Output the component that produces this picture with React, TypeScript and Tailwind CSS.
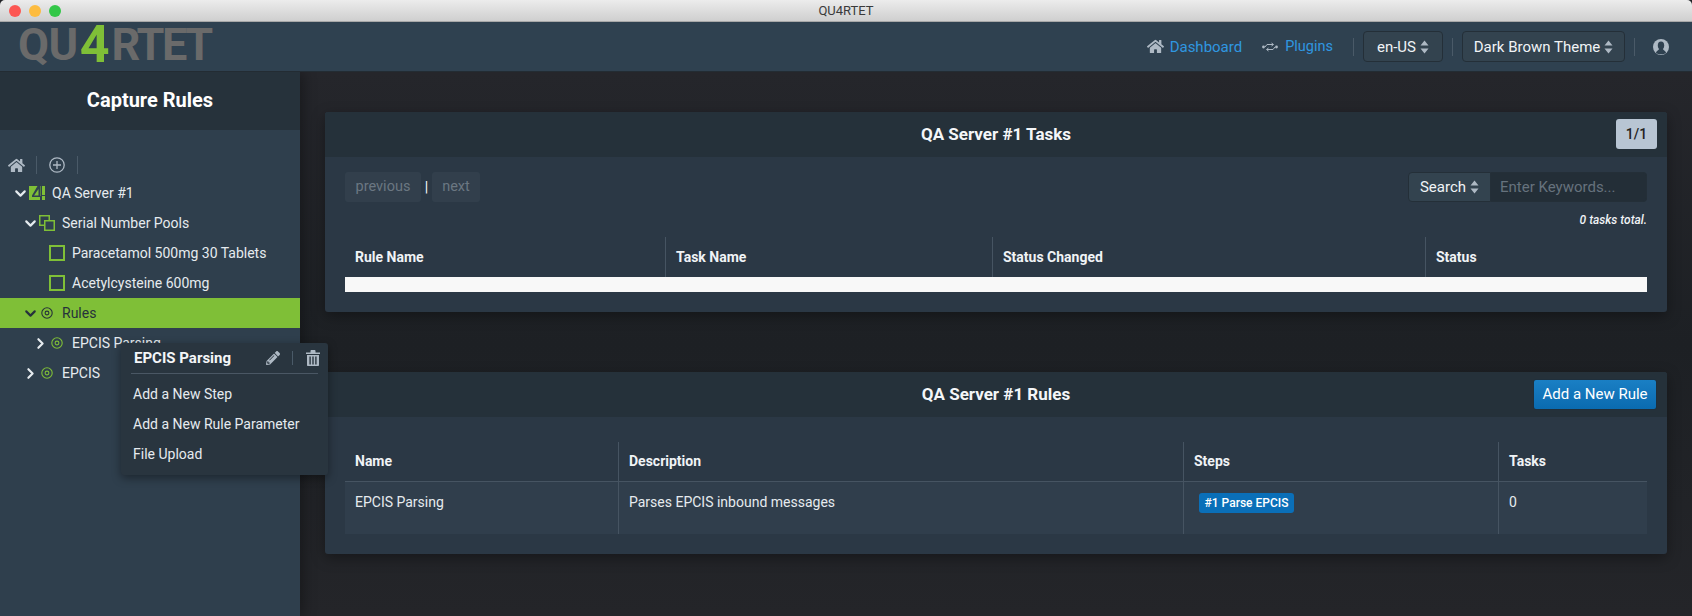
import React from "react";
import { ChevronDown, ChevronRight } from "lucide-react";
import { FaHome, FaPencilAlt } from "react-icons/fa";

const Updown = ({ c = "#aeb9c4" }: { c?: string }) => (
  <svg width="9" height="14" viewBox="0 0 9 14" className="shrink-0">
    <path d="M4.5 0.5 L8.5 5.5 H0.5 Z M4.5 13.5 L8.5 8.5 H0.5 Z" fill={c} />
  </svg>
);

const Target = ({ c = "#7fbf37" }: { c?: string }) => (
  <svg width="12" height="12" viewBox="0 0 12 12" className="shrink-0">
    <circle cx="6" cy="6" r="5.2" fill="none" stroke={c} strokeWidth="1.1" />
    <circle cx="6" cy="6" r="1.9" fill="none" stroke={c} strokeWidth="1.1" />
  </svg>
);

const Plugin = () => (
  <svg width="16" height="10" viewBox="0 0 16 10">
    <circle cx="1.5" cy="5" r="1.4" fill="#aeb9c4" />
    <circle cx="14.5" cy="5" r="1.4" fill="#aeb9c4" />
    <path d="M3 5 L5 2.5 H11 M9.5 1 L11.5 2.5 L9.5 4 M13 5 L11 7.5 H5 M6.5 6 L4.5 7.5 L6.5 9" fill="none" stroke="#aeb9c4" strokeWidth="1" />
  </svg>
);

const User = () => (
  <svg width="16" height="16" viewBox="0 0 16 16">
    <circle cx="8" cy="8" r="8" fill="#aeb9c4" />
    <ellipse cx="8" cy="6.6" rx="3.2" ry="4" fill="#2f4150" />
    <path d="M2.8 14 C3.5 11.5 6 11 6.5 9.5 H9.5 C10 11 12.5 11.5 13.2 14 C10.5 15.8 5.5 15.8 2.8 14 Z" fill="#2f4150" />
  </svg>
);

const Trash = () => (
  <svg width="14" height="16" viewBox="0 0 14 16">
    <path d="M0 2.5 H4.5 V1 C4.5 .4 5 0 5.5 0 H8.5 C9 0 9.5 .4 9.5 1 V2.5 H14 V4 H0 Z" fill="#aeb9c4" />
    <path d="M1 5 H13 V15 C13 15.6 12.6 16 12 16 H2 C1.4 16 1 15.6 1 15 Z M3.4 6.5 V14.5 H4.8 V6.5 Z M6.3 6.5 V14.5 H7.7 V6.5 Z M9.2 6.5 V14.5 H10.6 V6.5 Z" fill="#aeb9c4" fillRule="evenodd" />
  </svg>
);

const Pools = () => (
  <svg width="16" height="16" viewBox="0 0 16 16" className="shrink-0">
    <rect x="0.75" y="0.75" width="9.5" height="9.5" fill="none" stroke="#7fbf37" strokeWidth="1.5" />
    <rect x="5.75" y="5.75" width="9.5" height="9.5" fill="#2f4150" stroke="#7fbf37" strokeWidth="1.5" />
  </svg>
);

const MiniLogo = () => (
  <svg width="16" height="14" viewBox="0 0 16 14" className="shrink-0">
    <rect width="16" height="14" fill="#7fbf37" />
    <path d="M8.5 0 H11 V10 H13 V14 H11 V11 H3 V9.5 Z M9.5 3 L5 9.5 H9.5 Z" fill="#2f4150" fillRule="evenodd" />
    <path d="M13 0 V14 H11.5 V0 Z" fill="#2f4150" />
    <path d="M13 9 H16 V10 H13 Z" fill="#2f4150" />
  </svg>
);

const Sep = ({ h = "h-[18px]" }: { h?: string }) => <span className={`w-px ${h} bg-[#4a5a68] shrink-0`} />;

const TreeRow = ({ indent, open, icon, label, active }: { indent: string; open?: boolean; icon: React.ReactNode; label: string; active?: boolean }) => (
  <div className={`h-[30px] flex items-center ${indent} ${active ? "bg-[#7fbf37] text-[#26323b]" : "text-[#e6ebef]"}`}>
    {open === undefined ? null : open ? (
      <ChevronDown size={17} strokeWidth={3} className="shrink-0 -mx-[1.5px]" />
    ) : (
      <ChevronRight size={17} strokeWidth={3} className="shrink-0 -mx-[1.5px]" />
    )}
    {icon}
    <span className="whitespace-nowrap">{label}</span>
  </div>
);

const Box = () => <span className="w-4 h-4 border-2 border-[#7fbf37] mr-[7px] shrink-0" />;

const HeadCell = ({ children, first }: { children: React.ReactNode; first?: boolean }) => (
  <div className={`px-[10px] flex items-center font-bold text-[#f0f3f6] ${first ? "" : "border-l border-[#465462]"}`}>{children}</div>
);

const BodyCell = ({ children, first }: { children: React.ReactNode; first?: boolean }) => (
  <div className={`px-[10px] pt-[10px] text-[#e6ebef] ${first ? "" : "border-l border-[#465462]"}`}>{children}</div>
);

const Card = ({ title, action, children, className }: { title: string; action: React.ReactNode; children: React.ReactNode; className: string }) => (
  <section className={`rounded-[3px] bg-[#2b3845] shadow-[0_4px_14px_rgba(0,0,0,0.35)] overflow-hidden ${className}`}>
    <header className="relative h-[45px] bg-[#25313a] flex items-center justify-center">
      <h2 className="text-[17px] font-bold text-[#f4f6f8]">{title}</h2>
      {action}
    </header>
    {children}
  </section>
);

export default function App() {
  return (
    <div className="w-[1692px] h-[616px] overflow-hidden flex flex-col text-[14px] text-white bg-[#202226]" style={{ fontFamily: "Roboto, 'Liberation Sans', sans-serif" }}>
      <div className="relative h-[22px] shrink-0 rounded-t-[5px] bg-gradient-to-b from-[#ececec] to-[#cfcfcf] border-b border-[#a8a8a8] flex items-center justify-center text-[13px] text-[#3a3a3a]">
        <div className="absolute left-[9px] top-[5px] flex gap-2">
          <span className="w-3 h-3 rounded-full bg-[#fc5753]" />
          <span className="w-3 h-3 rounded-full bg-[#fdbc40]" />
          <span className="w-3 h-3 rounded-full bg-[#33c748]" />
        </div>
        QU4RTET
      </div>

      <div className="h-[50px] shrink-0 bg-[#2f4150] border-b border-[#232c33] flex items-center justify-between pl-[18px] pr-[23px] z-20">
        <div className="flex items-center h-full pb-[4px] text-[45px] font-bold text-[#6a6a6a] leading-none select-none">
          <span className="tracking-[-0.5px]">QU</span>
          <span className="text-[#7fbf37] text-[52px] ml-[2px] mr-[2px]">4</span>
          <span className="tracking-[-2.5px]">RTET</span>
        </div>
        <div className="flex items-center text-[15px]">
          <FaHome size={17} className="text-[#aeb9c4] mr-[6px]" />
          <span className="text-[#2f97e0] pt-px">Dashboard</span>
          <span className="ml-[20px] mr-[7px] flex"><Plugin /></span>
          <span className="text-[#2f97e0] text-[14.5px] pt-px">Plugins</span>
          <span className="ml-[20px] mr-[9px] flex"><Sep /></span>
          <div className="h-[31px] w-[80px] pt-px rounded-[4px] border border-[#242f38] bg-[#33434f] flex items-center justify-center gap-1 text-[#f0f3f6]">en-US <Updown /></div>
          <span className="mx-[9px] flex"><Sep /></span>
          <div className="h-[31px] w-[163px] pt-px rounded-[4px] border border-[#242f38] bg-[#33434f] flex items-center justify-center gap-1 text-[#f0f3f6]">Dark Brown Theme <Updown /></div>
          <span className="ml-[9px] mr-[18px] flex"><Sep /></span>
          <User />
        </div>
      </div>

      <div className="flex-1 flex min-h-0 relative">
        <aside className="relative w-[300px] shrink-0 bg-[#2f3f4d] shadow-[4px_0_12px_rgba(0,0,0,0.3)] z-10">
          <div className="h-[58px] bg-[#26323b] flex items-center justify-center text-[20px] font-bold text-white pb-[2px]">Capture Rules</div>
          <div className="flex items-center h-[20px] mt-[25px] pl-[8px] text-[#aeb9c4]">
            <FaHome size={17} />
            <span className="ml-[11px] mr-[12px] flex"><Sep /></span>
            <svg width="16" height="16" viewBox="0 0 16 16"><circle cx="8" cy="8" r="7.2" fill="none" stroke="#aeb9c4" strokeWidth="1.3" /><path d="M8 4 V12 M4 8 H12" stroke="#aeb9c4" strokeWidth="1.3" /></svg>
            <span className="ml-[12px] flex"><Sep /></span>
          </div>
          <div className="mt-[3px]">
            <TreeRow indent="pl-[13px]" open icon={<span className="ml-[2px] mr-[7px] flex"><MiniLogo /></span>} label="QA Server #1" />
            <TreeRow indent="pl-[23px]" open icon={<span className="ml-[2px] mr-[7px] flex"><Pools /></span>} label="Serial Number Pools" />
            <TreeRow indent="pl-[49px]" icon={<Box />} label="Paracetamol 500mg 30 Tablets" />
            <TreeRow indent="pl-[49px]" icon={<Box />} label="Acetylcysteine 600mg" />
            <TreeRow indent="pl-[23px]" open active icon={<span className="ml-[4px] mr-[9px] flex"><Target c="#26323b" /></span>} label="Rules" />
            <TreeRow indent="pl-[33px]" open={false} icon={<span className="ml-[4px] mr-[9px] flex"><Target /></span>} label="EPCIS Parsing" />
            <TreeRow indent="pl-[23px]" open={false} icon={<span className="ml-[4px] mr-[9px] flex"><Target /></span>} label="EPCIS" />
          </div>
          <div className="absolute left-[121px] top-[271px] w-[207px] h-[132px] rounded-[3px] bg-[#29353f] shadow-[0_3px_10px_rgba(0,0,0,0.4)] px-[10px] z-30">
            <div className="h-[31px] flex items-center border-b border-[#4a5764]">
              <span className="pl-[3px] text-[15px] font-bold text-[#f4f6f8]">EPCIS Parsing</span>
              <span className="ml-auto flex items-center text-[#aeb9c4]">
                <FaPencilAlt size={14} />
                <span className="ml-[12px] mr-[13px] flex"><Sep h="h-[14px]" /></span>
                <span className="mr-[-2px] flex"><Trash /></span>
              </span>
            </div>
            <div className="text-[#e6ebef] pl-[2px] mt-[5px]">
              <div className="h-[30px] flex items-center">Add a New Step</div>
              <div className="h-[30px] flex items-center">Add a New Rule Parameter</div>
              <div className="h-[30px] flex items-center">File Upload</div>
            </div>
          </div>
        </aside>

        <main className="flex-1 min-w-0 pl-[25px] pr-[25px] pt-[40px] bg-gradient-to-b from-[#25262b] via-[#1d2024] to-[#242529]">
          <Card
            className="h-[200px] mb-[60px]"
            title="QA Server #1 Tasks"
            action={<span className="absolute right-[10px] top-[7px] w-[41px] h-[30px] rounded-[3px] bg-[#b8c5d3] text-[#222] flex items-center justify-center font-medium">1/1</span>}
          >
            <div className="px-5 pt-[15px]">
              <div className="flex items-start h-[65px]">
                <div className="flex items-center">
                  <span className="h-[30px] w-[76px] rounded-[3px] bg-[#323f4c] text-[#6b7782] text-[14.5px] flex items-center justify-center">previous</span>
                  <span className="w-[11px] text-center text-white">|</span>
                  <span className="h-[30px] w-[48px] rounded-[3px] bg-[#323f4c] text-[#6b7782] text-[14.5px] flex items-center justify-center">next</span>
                </div>
                <div className="ml-auto flex flex-col items-end">
                  <div className="flex h-[30px] text-[15px]">
                    <div className="w-[83px] rounded-l-[4px] border border-[#242f38] bg-[#33434f] flex items-center justify-center gap-1 text-[#f0f3f6]">Search <Updown /></div>
                    <div className="w-[156px] rounded-r-[4px] border border-l-0 border-[#242f38] bg-[#232e37] flex items-center pl-[9px] text-[#66727d]">Enter Keywords...</div>
                  </div>
                  <div className="mt-[9px] text-[12px] italic font-medium text-[#f0f3f6]">0 tasks total.</div>
                </div>
              </div>
              <div className="grid grid-cols-[320px_327px_433px_222px] h-[40px]">
                <HeadCell first>Rule Name</HeadCell>
                <HeadCell>Task Name</HeadCell>
                <HeadCell>Status Changed</HeadCell>
                <HeadCell>Status</HeadCell>
              </div>
              <div className="h-[15px] bg-[#f8f8f8]" />
            </div>
          </Card>

          <Card
            className="h-[182px]"
            title="QA Server #1 Rules"
            action={<button className="absolute right-[10px] top-[7px] w-[124px] h-[31px] rounded-[3px] border border-[#1f2f3c] bg-gradient-to-b from-[#1a7fc4] to-[#0a6bb0] text-white text-[15px] flex items-center justify-center">Add a New Rule</button>}
          >
            <div className="px-5 pt-[25px]">
              <div className="grid grid-cols-[273px_565px_315px_149px] h-[40px] border-b border-[#465462]">
                <HeadCell first>Name</HeadCell>
                <HeadCell>Description</HeadCell>
                <HeadCell>Steps</HeadCell>
                <HeadCell>Tasks</HeadCell>
              </div>
              <div className="grid grid-cols-[273px_565px_315px_149px] h-[52px] bg-[#303e4c]">
                <BodyCell first>EPCIS Parsing</BodyCell>
                <BodyCell>Parses EPCIS inbound messages</BodyCell>
                <div className="border-l border-[#465462] pl-[15px] pt-[10px]">
                  <span className="inline-flex items-center justify-center h-5 w-[95px] rounded-[3px] bg-[#0a6fb8] text-[12px] font-medium text-white">#1 Parse EPCIS</span>
                </div>
                <BodyCell>0</BodyCell>
              </div>
            </div>
          </Card>
        </main>
      </div>
    </div>
  );
}
